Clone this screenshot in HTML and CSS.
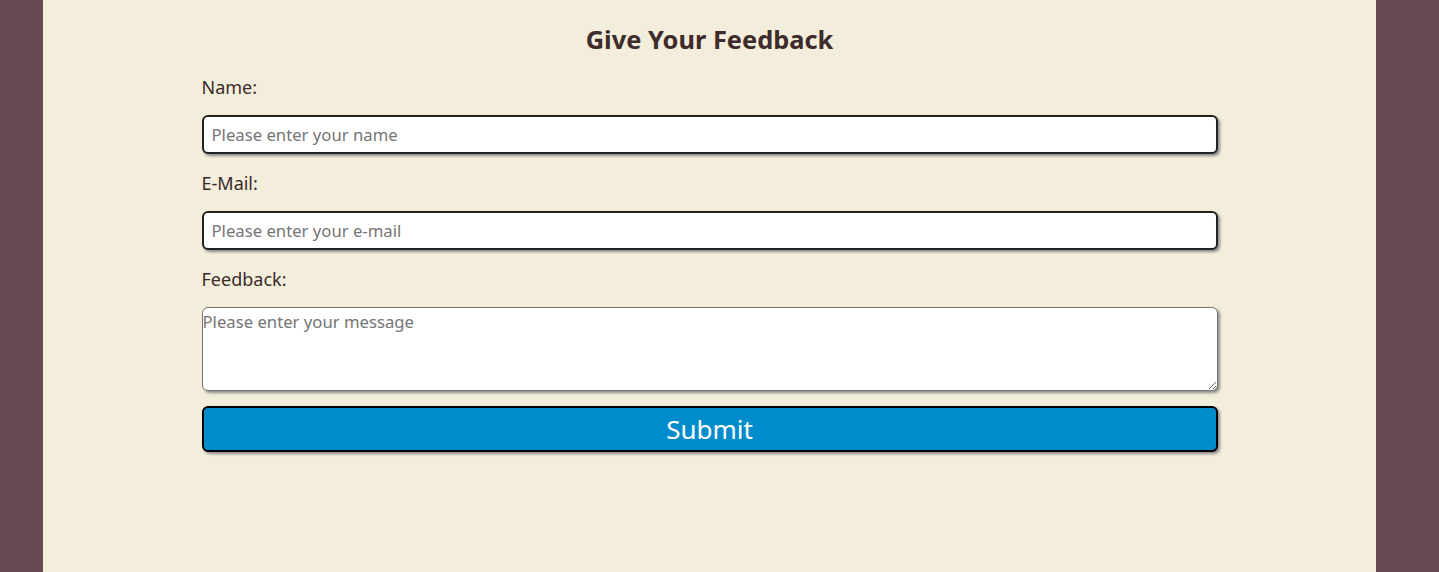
FILE: index.html
```html
<!DOCTYPE html>
<html lang="en">
<head>
<meta charset="utf-8">
<title>Feedback</title>
<link rel="stylesheet" href="styles.css">
</head>
<body>
<main class="page">
  <h1 class="title">Give Your Feedback</h1>
  <form class="form">
    <label class="label" for="name">Name:</label>
    <input class="field" id="name" type="text" placeholder="Please enter your name">
    <label class="label" for="email">E-Mail:</label>
    <input class="field" id="email" type="email" placeholder="Please enter your e-mail">
    <label class="label" for="msg">Feedback:</label>
    <textarea class="area" id="msg" placeholder="Please enter your message"></textarea>
    <button class="submit" type="button">Submit</button>
  </form>
</main>
</body>
</html>
```
FILE: styles.css
```css
html, body {
  margin: 0;
  padding: 0;
}
body {
  background: #694a53;
  font-family: "Noto Sans", "Open Sans", sans-serif;
  color: #3b2a2a;
}
.page {
  margin: 0 63px 0 43px;
  min-height: 572px;
  background: #f3eedb;
  padding-top: 21px;
  box-sizing: border-box;
}
.title {
  margin: 0;
  text-align: center;
  font-size: 25.4px;
  line-height: 36px;
  font-weight: 700;
  color: #3e2b2b;
}
.form {
  width: 1016px;
  margin: 0 auto;
  display: flex;
  flex-direction: column;
  padding-top: 18px;
}
.label {
  font-size: 18px;
  line-height: 24px;
  margin-bottom: 16px;
}
.field {
  height: 39px;
  box-sizing: border-box;
  border: 2px solid #222;
  border-radius: 6px;
  padding: 0 8px;
  font-family: inherit;
  font-size: 16.7px;
  color: #333;
  background: #fff;
  box-shadow: 2px 2px 3px #888;
  margin-bottom: 17px;
}
.field::placeholder, .area::placeholder {
  color: #757575;
}
.area {
  height: 84px;
  box-sizing: border-box;
  border: 1px solid #767676;
  border-radius: 6px;
  padding: 2px 0;
  font-family: inherit;
  font-size: 16.7px;
  background: #fff;
  box-shadow: 2px 2px 3px #888;
  resize: vertical;
  margin-bottom: 15px;
}
.submit {
  height: 46px;
  box-sizing: border-box;
  background: #008ccb;
  border: 2px solid #000;
  border-radius: 6px;
  color: #fff;
  font-family: inherit;
  font-size: 26px;
  line-height: 1;
  box-shadow: 2px 2px 3px #888;
  cursor: pointer;
}
```
